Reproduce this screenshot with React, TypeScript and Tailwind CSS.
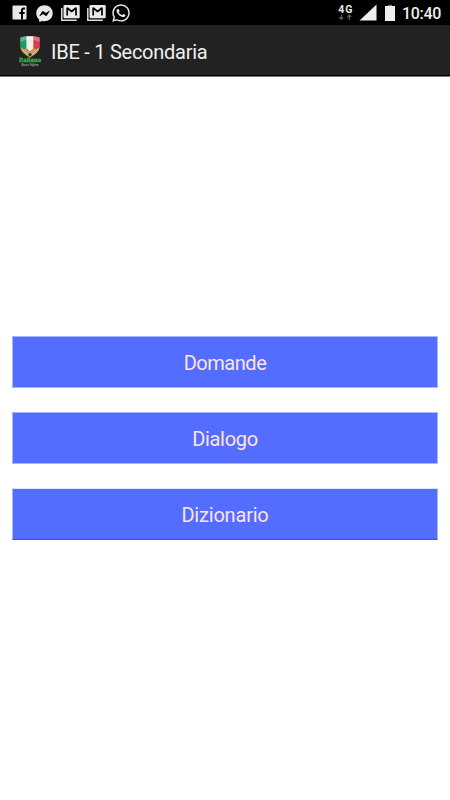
import React from "react";
import { FaFacebookMessenger, FaWhatsapp } from "react-icons/fa";

function FacebookIcon() {
  return (
    <svg className="h-[15px] w-[15px]" viewBox="0 0 15 15">
      <path fill="#e9e9e9" d="M1.500.5h12q1 0 1 1v12q0 1-1 1h-12q-1 0-1-1v-12q0-1 1-1z" />
      <path fill="none" stroke="#000" strokeWidth="2" d="M13 3.500h-1.200Q10 3.500 10 5.500v9M7.300 8h5.400" />
    </svg>
  );
}

function MailStackIcon() {
  return (
    <svg className="h-4 w-[19px]" viewBox="0 0 19 16">
      <path d="M.8 3v12.200h15" fill="none" stroke="#dedede" strokeWidth="1.500" />
      <rect x="2.500" y="0" width="16.200" height="13.300" rx="1" fill="#e9e9e9" />
      <path d="M6.200 10.500V2.800l4.400 3.700L15 2.800v7.700" fill="none" stroke="#000" strokeWidth="1.700" strokeLinejoin="bevel" />
    </svg>
  );
}

function AppLogo() {
  return (
    <svg className="block h-[32px] w-[26px] overflow-visible" viewBox="0 0 26 32">
      <path d="M3.500 1.500Q13-.8 22.500 1.500V12q-1 5.500-9.500 9.500Q4.500 17.500 3.500 12z" fill="#b98c58" />
      <path d="M3.500 1.500Q6.500.4 9.500.3V12L7 13.500 3.500 11.500z" fill="#159f66" />
      <path d="M9.500.3q3.500-.3 7 0V12L13 15.500 9.500 12z" fill="#eeeeea" />
      <path d="M16.500.3q3 .1 6 1.200v10L19 13.500 16.500 12z" fill="#db3b51" />
      <path d="M3.500 1.500Q13-.8 22.500 1.500V6Q13 1.500 3.500 6z" fill="#fff" opacity=".28" />
      <path d="M3.500 11.500l3.500 2L9.500 12l3.500 4 3.500-4 2.500 1.500 3.500-2-3 5L13 21l-6.500-4.500z" fill="#c69a65" />
      <path d="M4.500 13l8.500 7.500 8.500-7.500" fill="none" stroke="#ead5ae" strokeWidth=".8" />
      <path d="M11 18.600l2-1.600 2 1.600-2 2.100z" fill="#302820" />
      <text x="2" y="26.300" textLength="22" lengthAdjust="spacingAndGlyphs" fontFamily="DejaVu Serif, serif" fontWeight="700" fontSize="6" fill="#24c44e" stroke="#24c44e" strokeWidth=".25">Italiano</text>
      <text x="4.500" y="30" textLength="17" lengthAdjust="spacingAndGlyphs" fontFamily="Liberation Sans, sans-serif" fontSize="3.600" fill="#c4c4c4">Basis Eğitim</text>
    </svg>
  );
}

function StatusBar() {
  return (
    <div className="flex h-[25px] shrink-0 items-start justify-between bg-black pl-3 pr-[9px]">
      <div className="flex items-start text-[#e9e9e9]">
        <div className="pt-[5px]"><FacebookIcon /></div>
        <FaFacebookMessenger className="ml-[9px] mt-[5px] h-[17px] w-[17px]" />
        <div className="ml-2 pt-[5px]"><MailStackIcon /></div>
        <div className="ml-[7px] pt-[5px]"><MailStackIcon /></div>
        <FaWhatsapp className="ml-[5px] mt-[3px] h-5 w-5" />
      </div>
      <div className="flex items-start">
        <svg className="mt-[4px] h-[17px] w-[15px]" viewBox="0 0 15 17">
          <text x=".3" y="8.600" textLength="14" fontFamily="Roboto, sans-serif" fontWeight="700" fontSize="10.500" fill="#e9e9e9">4G</text>
          <path d="M3.300 10.500v5M1.300 13.200l2 2.200 2-2.200M11.300 16v-5M9.300 13.200l2-2.200 2 2.200" fill="none" stroke="#5c5c5c" strokeWidth="1.200" />
        </svg>
        <svg className="ml-[6px] mt-[4px] h-[17px] w-[18px]" viewBox="0 0 18 17">
          <path d="M17.500.5v16H.5z" fill="#eee" />
        </svg>
        <svg className="ml-[8px] mt-[4px] h-[17px] w-[10px]" viewBox="0 0 10 17">
          <path d="M0 2h10v15H0z" fill="#eee" />
          <path d="M3 .8h4V2H3z" fill="#777" />
        </svg>
        <span className="ml-[7px] mt-[4px] whitespace-nowrap text-[16px] font-medium leading-[19px] tracking-[-0.3px] text-[#eee]">10:40</span>
      </div>
    </div>
  );
}

export default function App() {
  return (
    <div className="flex h-[800px] w-[450px] flex-col overflow-hidden bg-white font-[Roboto,sans-serif]">
      <StatusBar />
      <header className="flex h-[51px] shrink-0 items-start border-b border-black bg-[#222] pl-[17px] pt-[11px]">
        <AppLogo />
        <h1 className="ml-2 mt-1 whitespace-nowrap text-[20px] font-normal leading-6 tracking-[-0.25px] text-[#f0f0f0]">IBE - 1 Secondaria</h1>
      </header>
      <div className="h-px shrink-0 bg-[#777]" />
      <main className="flex flex-col px-3 pt-[259px]">
        <button className="h-[52px] border border-[#a8b6ff] bg-[#536dfe] pt-0.5 text-[20px] leading-6 tracking-[-0.45px] text-[#fce4ec]">Domande</button>
        <button className="mt-6 h-[52px] border border-[#a8b6ff] bg-[#536dfe] pt-0.5 text-[20px] leading-6 tracking-[-0.3px] text-[#fce4ec]">Dialogo</button>
        <button className="mt-6 h-[52px] border border-x-[#a8b6ff] border-b-[#3155f5] border-t-[#e2e6ff] bg-[#536dfe] pt-0.5 text-[20px] leading-6 tracking-[-0.2px] text-[#fce4ec]">Dizionario</button>
      </main>
    </div>
  );
}
